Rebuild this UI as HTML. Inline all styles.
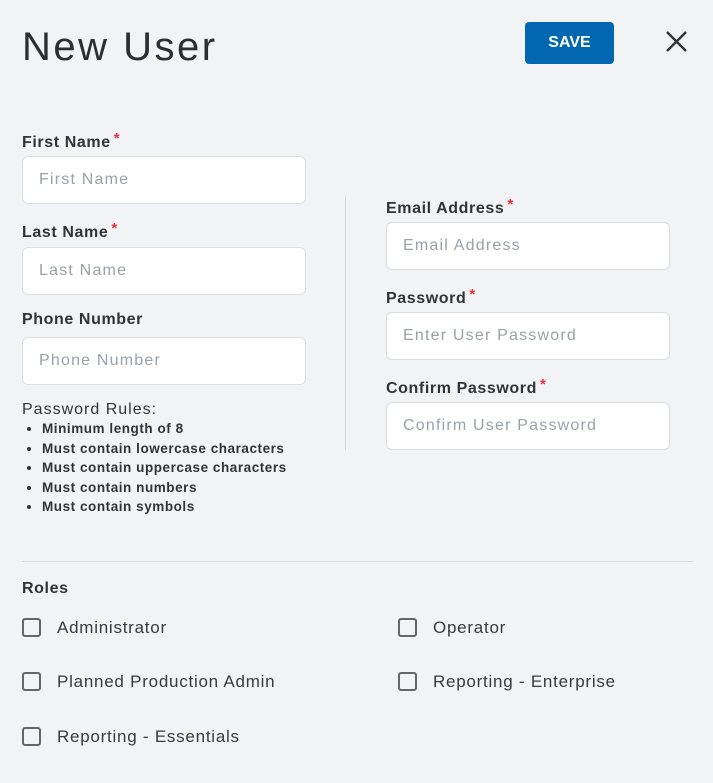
<!DOCTYPE html>
<html><head><style>
body{margin:0;width:713px;height:783px;background:#f2f3f5;font-family:"Liberation Sans",sans-serif;color:#333;position:relative;overflow:hidden}
.a{position:absolute;white-space:nowrap}
.lbl{font-size:16px;font-weight:bold;color:#333;letter-spacing:0.6px}
.lbl b{color:#e8313b;margin-left:3px;font-size:15px;vertical-align:4px}
.inp{position:absolute;background:#fff;border:1px solid #dcdee2;border-radius:6px;box-sizing:border-box;height:48px;font-size:16px;color:#9aa1a9;padding-left:16px;line-height:46px;letter-spacing:1.2px;white-space:nowrap}
.cb{position:absolute;width:19px;height:19px;border:2px solid #666;border-radius:3px;box-sizing:border-box}
.rl{position:absolute;font-size:17px;color:#3a3a3a;letter-spacing:0.75px;white-space:nowrap}
li{font-size:13.5px;font-weight:bold;color:#333;height:19.5px;line-height:19.5px;letter-spacing:0.55px}
</style></head><body>
<div class="a" style="left:22px;top:22px;font-size:40px;color:#2e2e2e;line-height:50px;letter-spacing:2.5px">New User</div>
<div class="a" style="left:525px;top:22px;width:89px;height:42px;background:#0067b0;border-radius:4px;color:#fff;font-weight:bold;font-size:16px;text-align:center;line-height:42px">SAVE</div>
<svg class="a" style="left:664px;top:29px" width="25" height="25" viewBox="0 0 25 25"><path d="M3 3L22 22M22 3L3 22" stroke="#333" stroke-width="2.4"/></svg>

<div class="a lbl" style="left:22px;top:130px">First Name<b>*</b></div>
<div class="inp" style="left:22px;top:156px;width:284px">First Name</div>
<div class="a lbl" style="left:22px;top:220px">Last Name<b>*</b></div>
<div class="inp" style="left:22px;top:247px;width:284px">Last Name</div>
<div class="a lbl" style="left:22px;top:311px">Phone Number</div>
<div class="inp" style="left:22px;top:337px;width:284px">Phone Number</div>
<div class="a" style="left:22px;top:401px;font-size:16px;color:#333;letter-spacing:1px">Password Rules:</div>
<ul class="a" style="left:0;top:419px;margin:0;padding-left:42px">
<li>Minimum length of 8</li><li>Must contain lowercase characters</li><li>Must contain uppercase characters</li><li>Must contain numbers</li><li>Must contain symbols</li></ul>

<div class="a" style="left:345px;top:196px;width:1px;height:254px;background:#d8dadd"></div>

<div class="a lbl" style="left:386px;top:196px">Email Address<b>*</b></div>
<div class="inp" style="left:386px;top:222px;width:284px">Email Address</div>
<div class="a lbl" style="left:386px;top:286px">Password<b>*</b></div>
<div class="inp" style="left:386px;top:312px;width:284px">Enter User Password</div>
<div class="a lbl" style="left:386px;top:376px">Confirm Password<b>*</b></div>
<div class="inp" style="left:386px;top:402px;width:284px">Confirm User Password</div>

<div class="a" style="left:22px;top:561px;width:671px;height:1px;background:#d8dadd"></div>
<div class="a lbl" style="left:22px;top:580px">Roles</div>
<div class="cb" style="left:22px;top:618px"></div><div class="rl" style="left:57px;top:618px">Administrator</div>
<div class="cb" style="left:398px;top:618px"></div><div class="rl" style="left:433px;top:618px">Operator</div>
<div class="cb" style="left:22px;top:672px"></div><div class="rl" style="left:57px;top:672px">Planned Production Admin</div>
<div class="cb" style="left:398px;top:672px"></div><div class="rl" style="left:433px;top:672px">Reporting - Enterprise</div>
<div class="cb" style="left:22px;top:727px"></div><div class="rl" style="left:57px;top:727px">Reporting - Essentials</div>
</body></html>
